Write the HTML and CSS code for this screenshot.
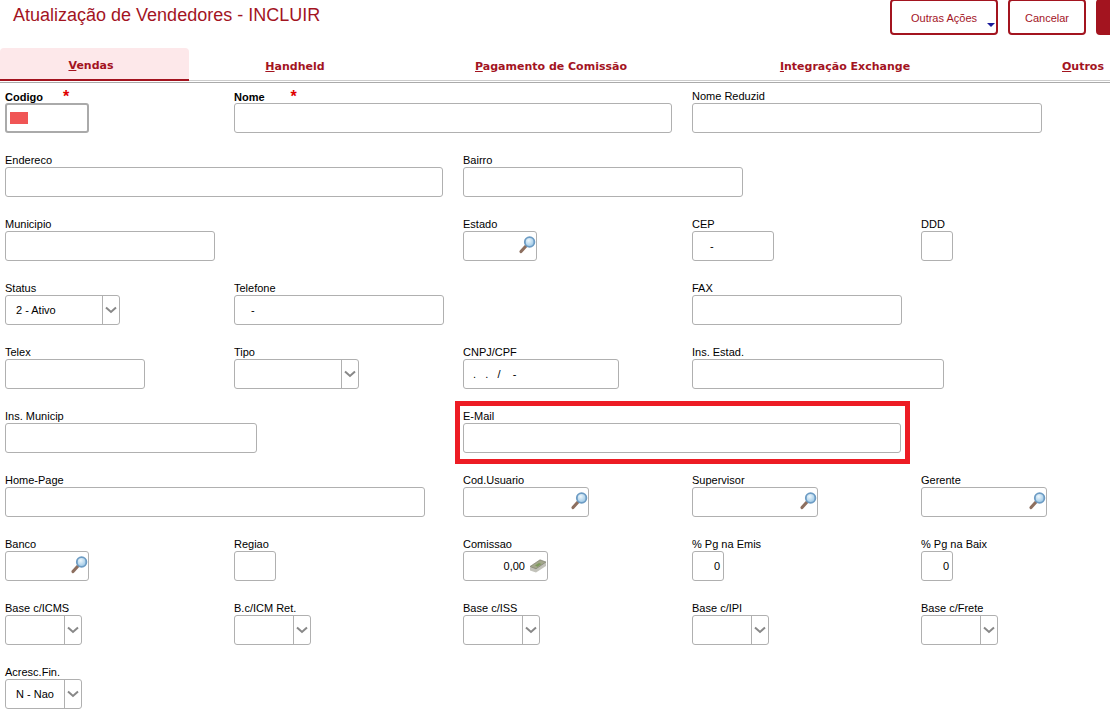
FILE: index.html
```html
<!DOCTYPE html>
<html lang="pt-BR">
<head>
  <meta charset="UTF-8">
  <title>Atualização de Vendedores - INCLUIR</title>
  <link rel="stylesheet" href="styles.css">
</head>
<body>
  <svg class="defs" width="0" height="0">
    <defs>
      <radialGradient id="lente" cx=".4" cy=".35" r=".7">
        <stop offset="0" stop-color="#eef7fc"/>
        <stop offset="1" stop-color="#94c3e4"/>
      </radialGradient>
      <symbol id="lupa" viewBox="0 0 18 18">
        <path d="M8 10 L3 15.5" stroke="#8d6f5f" stroke-width="3.2" stroke-linecap="round"/>
        <circle cx="11.6" cy="6" r="4.8" fill="url(#lente)" stroke="#6d9cc4" stroke-width="1.8"/>
      </symbol>
      <symbol id="dinheiro" viewBox="0 0 18 14">
        <path d="M1 8.5 L11 1.5 L17 3.5 L17 7 L7 13.5 L1 11.5 Z" fill="#c2c2ba"/>
        <path d="M1 7.5 L11 .8 L17 3 L7 9.8 Z" fill="#a3a78c" stroke="#77776a" stroke-width=".6"/>
        <path d="M6 6.5 L10 4 L12.5 5 L8.5 7.8 Z" fill="#7d9a5c"/>
      </symbol>
      <symbol id="seta" viewBox="0 0 12 8">
        <path d="M1 1.5 L6 6 L11 1.5" fill="none" stroke="#888" stroke-width="2"/>
      </symbol>
    </defs>
  </svg>

  <header class="topo">
    <h1>Atualização de Vendedores - INCLUIR</h1>
    <div class="acoes">
      <button class="btn btn-outras">Outras Ações<span class="triangulo"></span></button>
      <button class="btn btn-cancelar">Cancelar</button>
      <button class="btn btn-salvar"></button>
    </div>
  </header>

  <!-- Abas -->
  <nav class="abas">
    <a class="aba aba-ativa aba-vendas"><u>V</u>endas</a>
    <a class="aba aba-handheld"><u>H</u>andheld</a>
    <a class="aba aba-pagamento"><u>P</u>agamento de Comissão</a>
    <a class="aba aba-exchange"><u>I</u>ntegração Exchange</a>
    <a class="aba aba-outros"><u>O</u>utros</a>
  </nav>

  <!-- Formulario -->
  <main class="formulario">
    <div class="campo col-1 w-84"><label class="obrigatorio">Codigo<span class="asterisco asterisco-codigo">*</span></label><div class="caixa caixa-foco"><span class="marca"></span></div></div>
    <div class="campo col-2 w-438"><label class="obrigatorio">Nome<span class="asterisco asterisco-nome">*</span></label><div class="caixa"></div></div>
    <div class="campo col-4 w-350"><label>Nome Reduzid</label><div class="caixa"></div></div>

    <div class="campo col-1 w-438"><label>Endereco</label><div class="caixa"></div></div>
    <div class="campo col-3 w-280"><label>Bairro</label><div class="caixa"></div></div>

    <div class="campo col-1 w-210"><label>Municipio</label><div class="caixa"></div></div>
    <div class="campo col-3 w-74"><label>Estado</label><div class="caixa"><svg class="icone"><use href="#lupa"/></svg></div></div>
    <div class="campo col-4 w-82"><label>CEP</label><div class="caixa mascara-cep">-</div></div>
    <div class="campo col-5 w-32"><label>DDD</label><div class="caixa"></div></div>

    <div class="campo col-1 w-115"><label>Status</label><div class="caixa caixa-select"><span class="valor">2 - Ativo</span><span class="seta"><svg><use href="#seta"/></svg></span></div></div>
    <div class="campo col-2 w-210"><label>Telefone</label><div class="caixa mascara-tel">-</div></div>
    <div class="campo col-4 w-210"><label>FAX</label><div class="caixa"></div></div>

    <div class="campo col-1 w-140"><label>Telex</label><div class="caixa"></div></div>
    <div class="campo col-2 w-125"><label>Tipo</label><div class="caixa caixa-select"><span class="valor"></span><span class="seta"><svg><use href="#seta"/></svg></span></div></div>
    <div class="campo col-3 w-156"><label>CNPJ/CPF</label><div class="caixa mascara-cnpj">.   .   /    -</div></div>
    <div class="campo col-4 w-252"><label>Ins. Estad.</label><div class="caixa"></div></div>

    <div class="campo col-1 w-252"><label>Ins. Municip</label><div class="caixa"></div></div>
    <div class="campo col-3 w-438 destaque"><label>E-Mail</label><div class="caixa"></div></div>

    <div class="campo col-1 w-420"><label>Home-Page</label><div class="caixa"></div></div>
    <div class="campo col-3 w-126"><label>Cod.Usuario</label><div class="caixa"><svg class="icone"><use href="#lupa"/></svg></div></div>
    <div class="campo col-4 w-126"><label>Supervisor</label><div class="caixa"><svg class="icone"><use href="#lupa"/></svg></div></div>
    <div class="campo col-5 w-126"><label>Gerente</label><div class="caixa"><svg class="icone"><use href="#lupa"/></svg></div></div>

    <div class="campo col-1 w-84"><label>Banco</label><div class="caixa"><svg class="icone"><use href="#lupa"/></svg></div></div>
    <div class="campo col-2 w-42"><label>Regiao</label><div class="caixa"></div></div>
    <div class="campo col-3 w-85"><label>Comissao</label><div class="caixa caixa-numero">0,00<svg class="icone-dinheiro"><use href="#dinheiro"/></svg></div></div>
    <div class="campo col-4 w-32"><label>% Pg na Emis</label><div class="caixa caixa-zero">0</div></div>
    <div class="campo col-5 w-32"><label>% Pg na Baix</label><div class="caixa caixa-zero">0</div></div>

    <div class="campo col-1 w-77"><label>Base c/ICMS</label><div class="caixa caixa-select"><span class="valor"></span><span class="seta"><svg><use href="#seta"/></svg></span></div></div>
    <div class="campo col-2 w-77"><label>B.c/ICM Ret.</label><div class="caixa caixa-select"><span class="valor"></span><span class="seta"><svg><use href="#seta"/></svg></span></div></div>
    <div class="campo col-3 w-77"><label>Base c/ISS</label><div class="caixa caixa-select"><span class="valor"></span><span class="seta"><svg><use href="#seta"/></svg></span></div></div>
    <div class="campo col-4 w-77"><label>Base c/IPI</label><div class="caixa caixa-select"><span class="valor"></span><span class="seta"><svg><use href="#seta"/></svg></span></div></div>
    <div class="campo col-5 w-77"><label>Base c/Frete</label><div class="caixa caixa-select"><span class="valor"></span><span class="seta"><svg><use href="#seta"/></svg></span></div></div>

    <div class="campo col-1 w-77"><label>Acresc.Fin.</label><div class="caixa caixa-select"><span class="valor">N - Nao</span><span class="seta"><svg><use href="#seta"/></svg></span></div></div>
  </main>
</body>
</html>
```

FILE: styles.css
```css
html, body {
  margin: 0;
  height: 713px;
  overflow: hidden;
}

body {
  font-family: "Liberation Sans", Arial, sans-serif;
  font-size: 11px;
  color: #000;
  background-color: #fff;
}

.defs {
  position: absolute;
}

/* Topo */
.topo {
  display: flex;
  justify-content: space-between;
  height: 48px;
}

.topo h1 {
  margin: 5px 0 0 13px;
  font-size: 18px;
  line-height: 21px;
  font-weight: normal;
  color: #a3141f;
}

.acoes {
  display: flex;
  align-items: flex-start;
  gap: 10px;
  width: 220px;
  flex-shrink: 0;
  overflow: hidden;
}

.btn {
  position: relative;
  height: 36px;
  margin-top: -1px;
  padding: 2px 0 0;
  box-sizing: border-box;
  flex-shrink: 0;
  font-family: inherit;
  font-size: 11px;
  color: #a3141f;
  background: #fff;
  border: 2px solid #a3141f;
  border-radius: 4px;
}

.btn-outras {
  width: 108px;
}

.btn-cancelar {
  width: 78px;
}

.btn-salvar {
  width: 40px;
  background: #a3141f;
}

.triangulo {
  position: absolute;
  right: 1px;
  bottom: 6px;
  border-left: 4px solid transparent;
  border-right: 4px solid transparent;
  border-top: 4px solid #1a1a9a;
}

/* Abas */
.abas {
  display: flex;
  align-items: flex-start;
  height: 34px;
  border-bottom: 1px solid #aaa;
  overflow: hidden;
}

.aba {
  flex-shrink: 0;
  box-sizing: border-box;
  height: 33px;
  padding-top: 12px;
  text-align: center;
  font-family: "DejaVu Sans", Verdana, sans-serif;
  font-size: 11px;
  font-weight: bold;
  color: #a3141f;
  border-bottom: 1px solid #ccc;
}

.aba-vendas { width: 189px; padding-right: 7px; }
.aba-handheld { width: 212px; }
.aba-pagamento { width: 300px; }
.aba-exchange { width: 288px; }
.aba-outros { width: 188px; }

.aba-ativa {
  padding-top: 11px;
  background-color: #fde8ea;
  border-bottom: 2px solid #a3141f;
  border-top-right-radius: 4px;
  border-top-left-radius: 4px;
}

/* Formulario */
.formulario {
  display: grid;
  grid-template-columns: repeat(5, 229px);
  row-gap: 20px;
  padding: 6px 0 0 5px;
}

.campo {
  position: relative;
}

.campo label {
  display: block;
  height: 14px;
  line-height: 14px;
  white-space: nowrap;
}

.campo .obrigatorio {
  line-height: 16px;
  font-weight: bold;
}

.asterisco {
  color: #e00000;
  font-size: 16px;
  line-height: 0;
  position: relative;
  top: 1px;
}

.asterisco-codigo { margin-left: 20px; }
.asterisco-nome { margin-left: 26px; }

.caixa {
  position: relative;
  display: flex;
  align-items: center;
  box-sizing: border-box;
  height: 30px;
  padding: 0 10px;
  white-space: pre;
  background: #fff;
  border: 1px solid #b0b0b0;
  border-radius: 3px;
}

.caixa-foco {
  border-width: 2px;
  padding: 0 3px;
  border-color: #aaa;
}

.marca {
  width: 18px;
  height: 12px;
  background-color: #f05555;
}

.icone {
  position: absolute;
  right: 0;
  top: 4px;
  width: 18px;
  height: 18px;
}

.caixa-select {
  padding: 0;
}

.caixa-select .valor {
  flex: 1;
  padding-left: 10px;
}

.seta {
  display: flex;
  align-items: center;
  justify-content: center;
  width: 16px;
  height: 100%;
  border-left: 1px solid #b0b0b0;
}

.seta svg {
  width: 12px;
  height: 8px;
}

.mascara-cep { padding-left: 17px; }
.mascara-tel { padding-left: 16px; }
.mascara-cnpj { padding-left: 9px; }

.caixa-numero {
  justify-content: flex-end;
  padding: 0 0 0 4px;
}

.icone-dinheiro {
  width: 18px;
  height: 14px;
  margin-left: 4px;
}

.caixa-zero {
  justify-content: flex-end;
  padding: 0 3px 0 0;
}

.destaque::after {
  content: "";
  position: absolute;
  top: -8px;
  bottom: -11px;
  left: -8px;
  right: -9px;
  border: 5px solid #ed1c24;
  pointer-events: none;
}

.col-1 { grid-column: 1; }
.col-2 { grid-column: 2; }
.col-3 { grid-column: 3; }
.col-4 { grid-column: 4; }
.col-5 { grid-column: 5; }

/* Larguras dos campos */
.w-32 { width: 32px; }
.w-42 { width: 42px; }
.w-74 { width: 74px; }
.w-77 { width: 77px; }
.w-82 { width: 82px; }
.w-84 { width: 84px; }
.w-85 { width: 85px; }
.w-115 { width: 115px; }
.w-125 { width: 125px; }
.w-126 { width: 126px; }
.w-140 { width: 140px; }
.w-156 { width: 156px; }
.w-210 { width: 210px; }
.w-252 { width: 252px; }
.w-280 { width: 280px; }
.w-350 { width: 350px; }
.w-420 { width: 420px; }
.w-438 { width: 438px; }
```
